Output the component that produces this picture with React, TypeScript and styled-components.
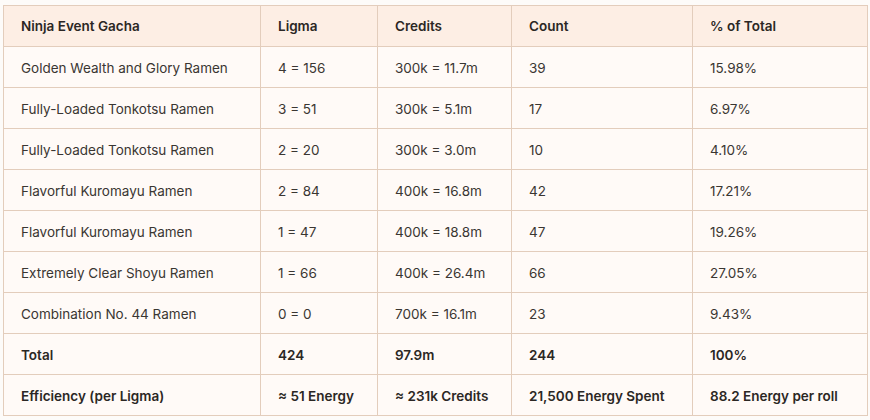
import React from 'react';
import styled, { createGlobalStyle } from 'styled-components';

const GlobalStyle = createGlobalStyle`
  body {
    margin: 0;
    background: #fdfbf9;
    font-family: Inter, "Noto Sans", sans-serif;
  }
`;

const Wrap = styled.div`
  padding: 5px 3px;
`;

const Table = styled.table`
  width: 864px;
  border-collapse: collapse;
  table-layout: fixed;
  background: #fffaf7;
  color: #3a3632;
  font-size: 13.5px;
`;

const HeadCell = styled.th`
  height: 40px;
  padding: 0 17px;
  text-align: left;
  font-weight: 600;
  color: #2b2724;
  background: #fdeee4;
  border: 1px solid #e3cdbc;
`;

const Cell = styled.td<{ $strong?: boolean }>`
  height: 39px;
  padding: 1px 17px 0;
  font-weight: ${p => (p.$strong ? 600 : 400)};
  color: ${p => (p.$strong ? '#2b2724' : '#3a3632')};
  border: 1px solid #e3cdbc;
  white-space: nowrap;
`;

const widths = [257, 117, 134, 181, 175];

const head = ['Ninja Event Gacha', 'Ligma', 'Credits', 'Count', '% of Total'];

const rows = [
	['Golden Wealth and Glory Ramen', '4 = 156', '300k = 11.7m', '39', '15.98%'],
	['Fully-Loaded Tonkotsu Ramen', '3 = 51', '300k = 5.1m', '17', '6.97%'],
	['Fully-Loaded Tonkotsu Ramen', '2 = 20', '300k = 3.0m', '10', '4.10%'],
	['Flavorful Kuromayu Ramen', '2 = 84', '400k = 16.8m', '42', '17.21%'],
	['Flavorful Kuromayu Ramen', '1 = 47', '400k = 18.8m', '47', '19.26%'],
	['Extremely Clear Shoyu Ramen', '1 = 66', '400k = 26.4m', '66', '27.05%'],
	['Combination No. 44 Ramen', '0 = 0', '700k = 16.1m', '23', '9.43%'],
];

const summary = [
	['Total', '424', '97.9m', '244', '100%'],
	['Efficiency (per Ligma)', '≈ 51 Energy', '≈ 231k Credits', '21,500 Energy Spent', '88.2 Energy per roll'],
];

export default function App() {
	return <>
		<GlobalStyle />
		<Wrap>
			<Table>
				<colgroup>
					{widths.map((w, i) => <col key={i} style={{ width: w }} />)}
				</colgroup>
				<thead>
					<tr>
						{head.map(h => <HeadCell key={h}>{h}</HeadCell>)}
					</tr>
				</thead>
				<tbody>
					{rows.map((r, i) => (
						<tr key={i}>
							{r.map((c, j) => <Cell key={j}>{c}</Cell>)}
						</tr>
					))}
					{summary.map((r, i) => (
						<tr key={'s' + i}>
							{r.map((c, j) => <Cell key={j} $strong>{c}</Cell>)}
						</tr>
					))}
				</tbody>
			</Table>
		</Wrap>
	</>;
}
